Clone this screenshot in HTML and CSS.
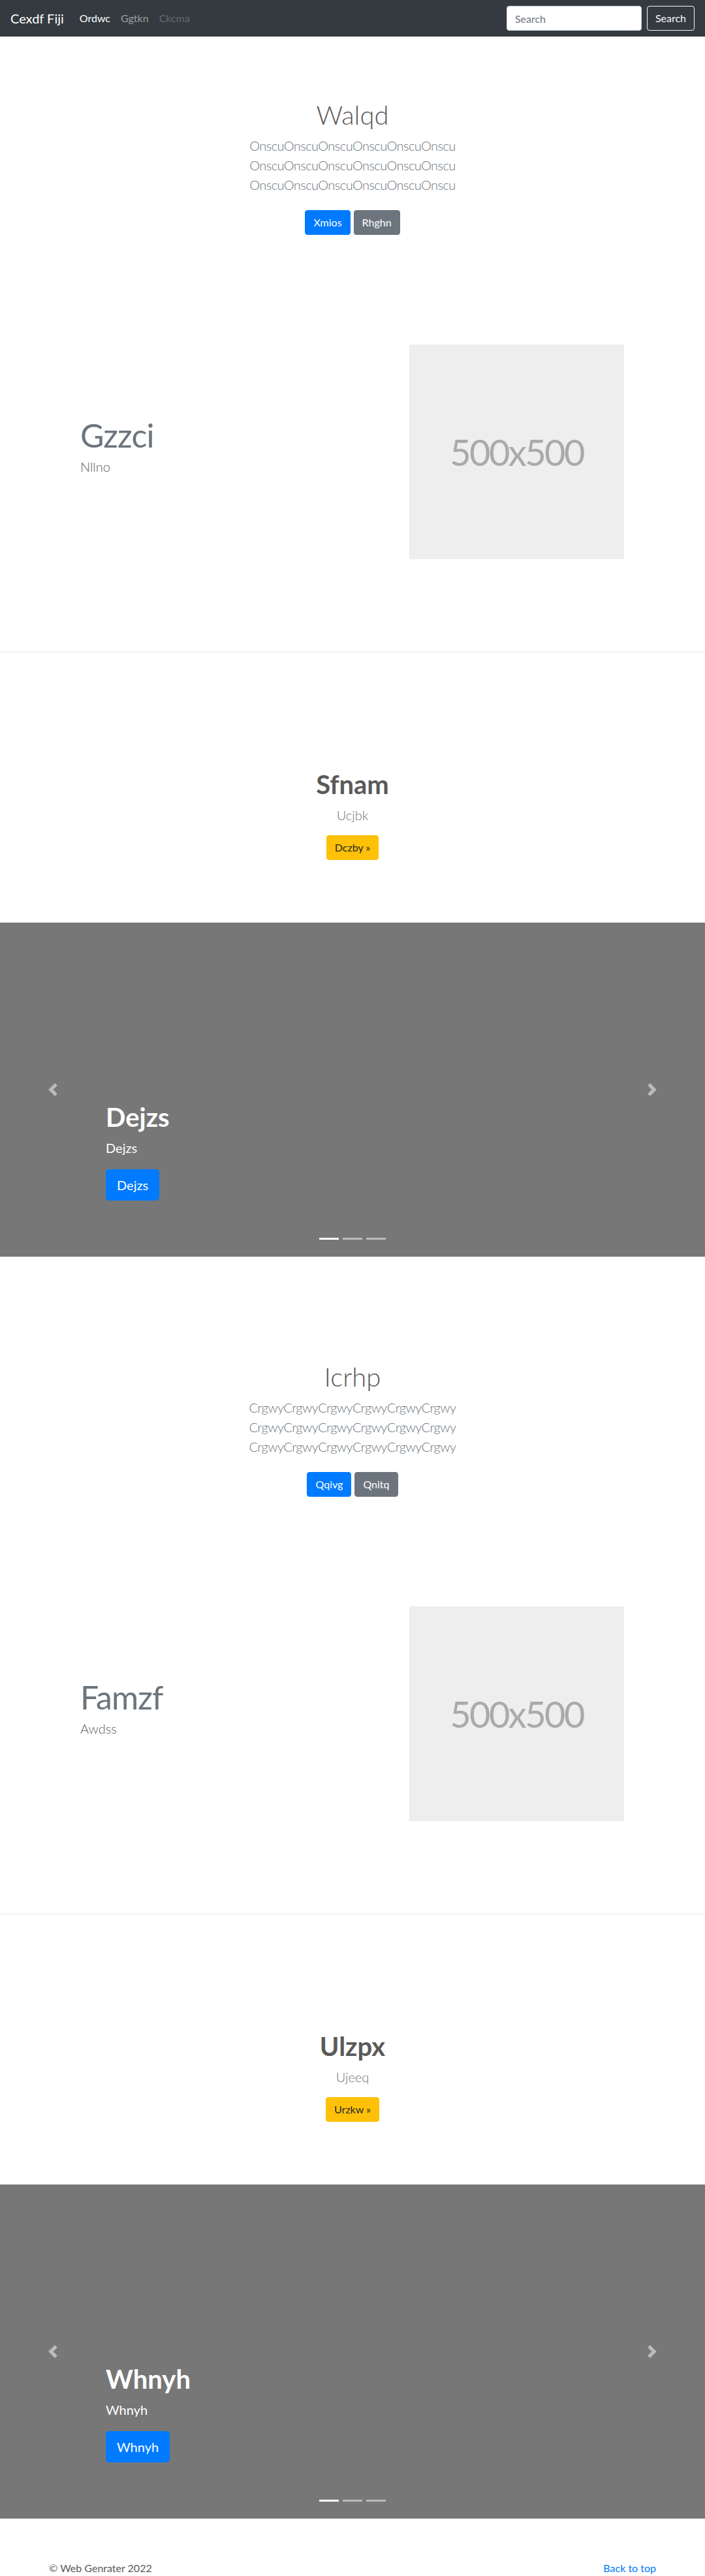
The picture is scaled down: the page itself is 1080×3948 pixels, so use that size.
FILE: index.html
```html
<!DOCTYPE html>
<html lang="en">
<head>
<meta charset="utf-8">
<title>Cexdf Fiji</title>
<link rel="stylesheet" href="styles.css">
</head>
<body>
<header class="navbar">
  <a class="brand" href="#">Cexdf Fiji</a>
  <ul class="nav">
    <li><a class="nav-link active" href="#">Ordwc</a></li>
    <li><a class="nav-link" href="#">Ggtkn</a></li>
    <li><a class="nav-link disabled" href="#">Ckcma</a></li>
  </ul>
  <form class="search">
    <input class="search-input" type="text" placeholder="Search">
    <button class="btn btn-outline-light" type="button">Search</button>
  </form>
</header>

<main>
  <section class="hero">
    <div class="hero-inner">
      <h1 class="hero-title">Walqd</h1>
      <p class="hero-lead">OnscuOnscuOnscuOnscuOnscuOnscu OnscuOnscuOnscuOnscuOnscuOnscu OnscuOnscuOnscuOnscuOnscuOnscu</p>
      <div class="hero-actions">
        <a class="btn btn-primary" href="#">Xmios</a>
        <a class="btn btn-secondary" href="#">Rhghn</a>
      </div>
    </div>
  </section>

  <section class="feature">
    <div class="feature-text">
      <h2 class="feature-title">Gzzci</h2>
      <p class="feature-lead">Nllno</p>
    </div>
    <div class="placeholder">500x500</div>
  </section>

  <hr class="divider">

  <section class="promo">
    <h2 class="promo-title">Sfnam</h2>
    <p class="promo-lead">Ucjbk</p>
    <div class="promo-actions"><a class="btn btn-warning" href="#">Dczby &raquo;</a></div>
  </section>

  <section class="carousel">
    <ol class="indicators">
      <li class="active"></li>
      <li></li>
      <li></li>
    </ol>
    <div class="carousel-caption">
      <h1 class="caption-title">Dejzs</h1>
      <p class="caption-text">Dejzs</p>
      <div class="caption-actions"><a class="btn btn-lg btn-primary" href="#">Dejzs</a></div>
    </div>
    <a class="control control-prev" href="#" aria-label="Previous">
      <svg viewBox="0 0 8 8" fill="#fff"><path d="M5.25 0l-4 4 4 4 1.5-1.5L4.25 4l2.5-2.5L5.25 0z"/></svg>
    </a>
    <a class="control control-next" href="#" aria-label="Next">
      <svg viewBox="0 0 8 8" fill="#fff"><path d="M2.75 0l-1.5 1.5L3.75 4l-2.5 2.5L2.75 8l4-4-4-4z"/></svg>
    </a>
  </section>

  <section class="hero">
    <div class="hero-inner">
      <h1 class="hero-title">Icrhp</h1>
      <p class="hero-lead">CrgwyCrgwyCrgwyCrgwyCrgwyCrgwy CrgwyCrgwyCrgwyCrgwyCrgwyCrgwy CrgwyCrgwyCrgwyCrgwyCrgwyCrgwy</p>
      <div class="hero-actions">
        <a class="btn btn-primary" href="#">Qqivg</a>
        <a class="btn btn-secondary" href="#">Qnitq</a>
      </div>
    </div>
  </section>

  <section class="feature">
    <div class="feature-text">
      <h2 class="feature-title">Famzf</h2>
      <p class="feature-lead">Awdss</p>
    </div>
    <div class="placeholder">500x500</div>
  </section>

  <hr class="divider">

  <section class="promo">
    <h2 class="promo-title">Ulzpx</h2>
    <p class="promo-lead">Ujeeq</p>
    <div class="promo-actions"><a class="btn btn-warning" href="#">Urzkw &raquo;</a></div>
  </section>

  <section class="carousel">
    <ol class="indicators">
      <li class="active"></li>
      <li></li>
      <li></li>
    </ol>
    <div class="carousel-caption">
      <h1 class="caption-title">Whnyh</h1>
      <p class="caption-text">Whnyh</p>
      <div class="caption-actions"><a class="btn btn-lg btn-primary" href="#">Whnyh</a></div>
    </div>
    <a class="control control-prev" href="#" aria-label="Previous">
      <svg viewBox="0 0 8 8" fill="#fff"><path d="M5.25 0l-4 4 4 4 1.5-1.5L4.25 4l2.5-2.5L5.25 0z"/></svg>
    </a>
    <a class="control control-next" href="#" aria-label="Next">
      <svg viewBox="0 0 8 8" fill="#fff"><path d="M2.75 0l-1.5 1.5L3.75 4l-2.5 2.5L2.75 8l4-4-4-4z"/></svg>
    </a>
  </section>
</main>

<footer class="footer">
  <p>&copy; Web Genrater 2022</p>
  <p><a href="#">Back to top</a></p>
</footer>
</body>
</html>
```

FILE: styles.css
```css
* {
  box-sizing: border-box;
}

html, body {
  margin: 0;
  padding: 0;
}

body {
  font-family: Lato, "Open Sans", "Noto Sans", sans-serif;
  font-size: 16px;
  line-height: 1.5;
  color: #5a5a5a;
  background: #fff;
}

/* ---------- navbar ---------- */
.navbar {
  display: flex;
  align-items: center;
  height: 56px;
  padding: 8px 16px;
  background: #343a40;
}

.brand {
  font-size: 20px;
  line-height: 30px;
  padding: 5px 0;
  margin-right: 16px;
  color: #fff;
  text-decoration: none;
  white-space: nowrap;
}

.nav {
  display: flex;
  flex: 1;
  list-style: none;
  margin: 0;
  padding: 0;
}

.nav-link {
  display: block;
  padding: 8px;
  color: rgba(255, 255, 255, 0.5);
  text-decoration: none;
}

.nav-link.active {
  color: #fff;
}

.nav-link.disabled {
  color: rgba(255, 255, 255, 0.25);
}

.search {
  display: flex;
  align-items: center;
  margin: 0;
}

.search-input {
  width: 207px;
  height: 38px;
  margin-right: 8px;
  padding: 6px 12px;
  font-family: inherit;
  font-size: 16px;
  line-height: 24px;
  color: #495057;
  background: #fff;
  border: 1px solid #ced4da;
  border-radius: 4px;
}

.search-input::placeholder {
  color: #6c757d;
}

/* ---------- buttons ---------- */
.btn {
  display: inline-block;
  padding: 6px 12px;
  font-family: inherit;
  font-size: 16px;
  line-height: 24px;
  font-weight: 400;
  text-align: center;
  text-decoration: none;
  white-space: nowrap;
  border: 1px solid transparent;
  border-radius: 4px;
}

.btn-outline-light {
  color: #f8f9fa;
  background: transparent;
  border-color: #f8f9fa;
}

.btn-primary {
  color: #fff;
  background: #007bff;
  border-color: #007bff;
}

.btn-secondary {
  color: #fff;
  background: #6c757d;
  border-color: #6c757d;
}

.btn-warning {
  color: #212529;
  background: #ffc107;
  border-color: #ffc107;
}

.btn-lg {
  padding: 8px 16px;
  font-size: 20px;
  line-height: 30px;
  border-radius: 5px;
}

/* ---------- hero ---------- */
.hero {
  padding: 96px 0 48px;
  text-align: center;
}

.hero-inner {
  max-width: 640px;
  margin: 0 auto;
  padding: 0 15px;
}

.hero-title {
  margin: 0 0 8px;
  font-size: 40px;
  line-height: 48px;
  font-weight: 300;
  color: #5a5a5a;
}

.hero-lead {
  margin: 0 0 16px;
  font-size: 20px;
  line-height: 30px;
  font-weight: 300;
  letter-spacing: -0.55px;
  color: #6c757d;
}

.hero-actions {
  display: flex;
  justify-content: center;
  gap: 5px;
  padding: 8px 0;
}

/* ---------- featurette ---------- */
.feature {
  display: flex;
  align-items: center;
  justify-content: space-between;
  padding: 112px 124px 142px 123px;
}

.feature-title {
  margin: 0 0 8px;
  font-size: 50px;
  line-height: 1;
  font-weight: 400;
  letter-spacing: -0.8px;
  color: #6c757d;
}

.feature-lead {
  margin: 0 0 14px;
  font-size: 20px;
  line-height: 30px;
  font-weight: 300;
  color: #5a5a5a;
}

.placeholder {
  display: flex;
  align-items: center;
  justify-content: center;
  width: 329px;
  height: 329px;
  flex: none;
  background: #eee;
  color: #aaa;
  font-size: 56px;
  line-height: normal;
  letter-spacing: -2.6px;
}

.divider {
  height: 0;
  margin: 0;
  border: 0;
  border-top: 1px solid rgba(0, 0, 0, 0.1);
}

/* ---------- promo ---------- */
.promo {
  padding: 178px 0 96px;
  text-align: center;
}

.promo-title {
  margin: 0 0 8px;
  font-size: 40px;
  line-height: 48px;
  font-weight: 700;
  color: #5a5a5a;
}

.promo-lead {
  margin: 0 0 16px;
  font-size: 20px;
  line-height: 30px;
  font-weight: 300;
  color: #6c757d;
}

.promo-actions {
  display: flex;
  justify-content: center;
}

/* ---------- carousel ---------- */
.carousel {
  position: relative;
  height: 512px;
  margin-bottom: 64px;
  background: #777;
  overflow: hidden;
}

.carousel-caption {
  position: absolute;
  left: 15%;
  right: 15%;
  bottom: 50px;
  z-index: 10;
  padding: 20px 0;
  color: #fff;
  text-align: left;
}

.caption-title {
  margin: 0 0 8px;
  font-size: 40px;
  line-height: 48px;
  font-weight: 700;
  color: #fff;
}

.caption-text {
  margin: 0 0 18px;
  font-size: 20px;
  line-height: 30px;
}

.caption-actions {
  display: flex;
  margin: 0 0 16px;
}

.control {
  position: absolute;
  top: 0;
  bottom: 0;
  z-index: 5;
  display: flex;
  align-items: center;
  justify-content: center;
  width: 15%;
  opacity: 0.5;
}

.control-prev {
  left: 0;
}

.control-next {
  right: 0;
}

.control svg {
  display: block;
  width: 20px;
  height: 20px;
}

.indicators {
  position: absolute;
  left: 15%;
  right: 15%;
  bottom: 0;
  z-index: 15;
  display: flex;
  justify-content: center;
  margin: 0 0 16px;
  padding: 0;
  list-style: none;
}

.indicators li {
  box-sizing: content-box;
  width: 30px;
  height: 3px;
  margin: 0 3px;
  background: #fff;
  background-clip: padding-box;
  border-top: 10px solid transparent;
  border-bottom: 10px solid transparent;
  opacity: 0.5;
}

.indicators li.active {
  opacity: 1;
}

/* ---------- footer ---------- */
.footer {
  display: flex;
  justify-content: space-between;
  max-width: 960px;
  margin: 0 auto;
  padding: 0 15px;
  color: #5a5a5a;
}

.footer p {
  margin: 0;
}

.footer a {
  color: #007bff;
  text-decoration: none;
}
```
